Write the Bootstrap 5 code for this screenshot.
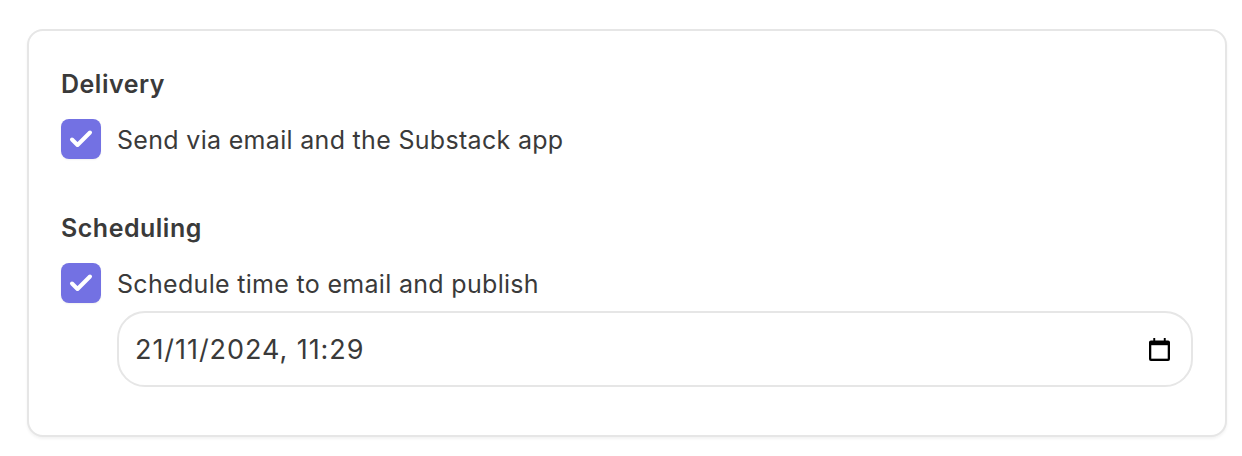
<!DOCTYPE html>
<html lang="en">
<head>
<meta charset="utf-8">
<title>Delivery settings</title>
<link href="https://cdn.jsdelivr.net/npm/bootstrap@5.3.0/dist/css/bootstrap.min.css" rel="stylesheet">
<style>
html,body{background:#fff;}
body{font-family:"Inter","Liberation Sans",sans-serif;color:#3a3a3a;margin:0;height:456px;overflow:hidden;}
.page-wrap{padding:29px 15px 0 27px;}
.panel-box{height:408px;border:2px solid #e6e6e6;border-radius:16px;padding:37px 32px 0 32px;box-shadow:0 2px 3px rgba(0,0,0,.05);background:#fff;}
.sec-title{font-size:25px;font-weight:600;line-height:32px;margin:0 0 19px;letter-spacing:.5px;}
.sec-two{margin-top:53px;}
.chk-row{height:40px;}
.chk-box{width:40px;height:40px;border-radius:8px;background:#7371e3;flex:none;margin-right:16px;box-shadow:0 1px 2px rgba(0,0,0,.06);}
.chk-text{font-size:25px;line-height:40px;letter-spacing:.31px;padding-top:2px;}
.date-field{margin:8px 0 0 56px;height:76px;border:2px solid #e6e6e6;border-radius:28px;padding:0 21px 0 16px;font-size:27px;letter-spacing:.95px;}
.date-val{padding-top:2px;}
</style>
</head>
<body>
<div class="page-wrap">
  <div class="panel-box">
    <h6 class="sec-title">Delivery</h6>
    <div class="chk-row d-flex align-items-center">
      <span class="chk-box d-flex align-items-center justify-content-center">
        <svg width="24" height="24" viewBox="0 0 24 24" fill="none" stroke="#fff" stroke-width="4" stroke-linecap="round" stroke-linejoin="round"><path d="M3 12.5l5.5 5.5L21 5.500"/></svg>
      </span>
      <span class="chk-text">Send via email and the Substack app</span>
    </div>
    <h6 class="sec-title sec-two">Scheduling</h6>
    <div class="chk-row d-flex align-items-center">
      <span class="chk-box d-flex align-items-center justify-content-center">
        <svg width="24" height="24" viewBox="0 0 24 24" fill="none" stroke="#fff" stroke-width="4" stroke-linecap="round" stroke-linejoin="round"><path d="M3 12.5l5.5 5.5L21 5.500"/></svg>
      </span>
      <span class="chk-text">Schedule time to email and publish</span>
    </div>
    <div class="date-field d-flex align-items-center justify-content-between">
      <span class="date-val">21/11/2024, 11:29</span>
      <svg width="21" height="23" viewBox="0 0 22 24"><path d="M4.5 0h2v2.500h9V0h2v2.500H20a2 2 0 0 1 2 2V22a2 2 0 0 1-2 2H2a2 2 0 0 1-2-2V4.500a2 2 0 0 1 2-2h2.500z" fill="#000"/><rect x="2.400" y="7.500" width="17.200" height="14.100" fill="#fff"/></svg>
    </div>
  </div>
</div>
<script src="https://cdn.jsdelivr.net/npm/bootstrap@5.3.0/dist/js/bootstrap.bundle.min.js"></script>
</body>
</html>
